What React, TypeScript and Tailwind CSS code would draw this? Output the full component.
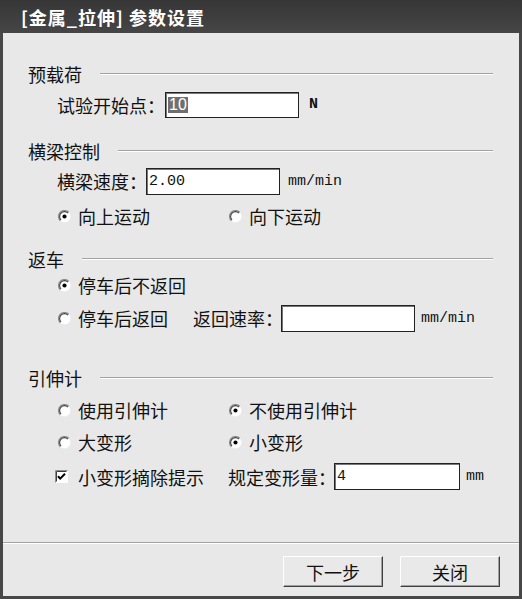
const cjk = "font-['Noto_Sans_CJK_SC','Noto_Sans',sans-serif]";
const mono = "font-['Liberation_Mono','DejaVu_Sans_Mono',monospace]";

const Radio = ({ checked }: { checked?: boolean }) => (
  <svg width="13" height="13" viewBox="0 0 12 12" className="shrink-0">
    <circle cx="6" cy="6" r="5.5" fill="#fff" />
    <path d="M2.1 9.9 A5.5 5.5 0 0 1 9.9 2.1" stroke="#8c8c8c" strokeWidth="1.1" fill="none" />
    <path d="M2.8 9.2 A4.5 4.5 0 0 1 9.2 2.8" stroke="#3c3c3c" strokeWidth="1" fill="none" />
    {checked && <circle cx="6" cy="6" r="1.9" fill="#000" />}
  </svg>
);

const Checkbox = ({ checked }: { checked?: boolean }) => (
  <svg width="13" height="13" viewBox="0 0 13 13" className="shrink-0">
    <rect x="0" y="0" width="13" height="13" fill="#fff" />
    <path d="M0.5 12.5 V0.5 H12.5" stroke="#8c8c8c" strokeWidth="1" fill="none" />
    <path d="M1.5 11.5 V1.5 H11.5" stroke="#3c3c3c" strokeWidth="1" fill="none" />
    {checked && <path d="M3 6.2 L5.2 8.6 L10 3.8" stroke="#000" strokeWidth="2" fill="none" />}
  </svg>
);

const Input = ({ width, children }: { width: string; children?: React.ReactNode }) => (
  <div
    className={`${width} h-[27px] bg-white border border-[#222] shadow-[inset_1px_1px_0_#777] flex items-center pl-[2px] overflow-hidden`}>
    {children}
  </div>
);

const Header = ({ label, className }: { label: string; className: string }) => (
  <div className={`h-[26px] flex items-center ${className}`}>
    <span className="text-[18px] leading-none whitespace-nowrap">{label}</span>
    <div className="flex-1 ml-[18px] h-[2px] border-t border-[#a3a3a3] border-b border-b-white" />
  </div>
);

const Option = ({ label, checked, width }: { label: string; checked?: boolean; width?: string }) => (
  <div className={`flex items-center gap-[7px] ${width ?? ""}`}>
    <Radio checked={checked} />
    <span className="text-[18px] leading-none whitespace-nowrap">{label}</span>
  </div>
);

const Button = ({ label }: { label: string }) => (
  <button className="w-[100px] h-[31px] bg-[#e9e9e9] border border-t-white border-l-white border-r-[#404040] border-b-[#404040] shadow-[inset_-1px_-1px_0_#a0a0a0] text-[18px] leading-none text-[#111]">
    {label}
  </button>
);

export default function App() {
  return (
    <div className={`w-[522px] h-[599px] flex flex-col bg-[#e8e8e8] text-[#111] ${cjk}`}>
      {/* Title bar */}
      <div className="h-[33px] shrink-0 flex items-center pl-[21px] bg-linear-to-b from-[#363636] to-[#464646] text-white text-[18px] font-bold leading-none tracking-[1px]">
        [金属_拉伸]&nbsp;参数设置
      </div>

      <div className="flex-1 flex flex-col border-l-[3px] border-r-[3px] border-b-[3px] border-[#474747]">
        <div className="flex-1 flex flex-col pl-[25px] pr-[26px] pt-[28px]">
          {/* 预载荷 */}
          <Header label="预载荷" className="" />
          <div className="h-[26px] mt-[5px] flex items-center pl-[29px]">
            <span className="w-[108px] text-[18px] leading-none whitespace-nowrap">试验开始点：</span>
            <div className="w-[134px] h-[26px] bg-white border border-[#222] shadow-[inset_1px_1px_0_#777] flex items-center pl-[2px]">
              <span className="bg-[#6f6f6f] text-white text-[16px] leading-none px-[1px] font-['Liberation_Sans',sans-serif]">10</span>
            </div>
            <span className={`ml-[10px] text-[15px] font-bold ${mono}`}>N</span>
          </div>

          {/* 横梁控制 */}
          <Header label="横梁控制" className="mt-[20px]" />
          <div className="h-[26px] mt-[4px] flex items-center pl-[29px]">
            <span className="w-[89px] text-[18px] leading-none whitespace-nowrap">横梁速度：</span>
            <Input width="w-[134px]">
              <span className={`text-[15px] leading-none ${mono}`}>2.00</span>
            </Input>
            <span className={`ml-[8px] mt-[2px] text-[15px] ${mono}`}>mm/min</span>
          </div>
          <div className="h-[26px] mt-[9px] flex items-center pl-[30px]">
            <Option label="向上运动" checked width="w-[171px]" />
            <Option label="向下运动" />
          </div>

          {/* 返车 */}
          <Header label="返车" className="mt-[17px]" />
          <div className="h-[26px] flex items-center pl-[30px]">
            <Option label="停车后不返回" checked />
          </div>
          <div className="h-[26px] mt-[7px] flex items-center pl-[30px]">
            <Option label="停车后返回" width="w-[135px]" />
            <span className="w-[88px] text-[18px] leading-none whitespace-nowrap">返回速率：</span>
            <Input width="w-[134px]" />
            <span className={`ml-[6px] mt-[2px] text-[15px] ${mono}`}>mm/min</span>
          </div>

          {/* 引伸计 */}
          <Header label="引伸计" className="mt-[34px]" />
          <div className="h-[26px] mt-[6px] flex items-center pl-[30px]">
            <Option label="使用引伸计" width="w-[171px]" />
            <Option label="不使用引伸计" checked />
          </div>
          <div className="h-[26px] mt-[6px] flex items-center pl-[30px]">
            <Option label="大变形" width="w-[171px]" />
            <Option label="小变形" checked />
          </div>
          <div className="h-[27px] mt-[8px] flex items-center pl-[27px]">
            <div className="w-[173px] flex items-center gap-[10px]">
              <Checkbox checked />
              <span className="text-[18px] leading-none whitespace-nowrap">小变形摘除提示</span>
            </div>
            <span className="w-[106px] text-[18px] leading-none whitespace-nowrap">规定变形量：</span>
            <Input width="w-[126px]">
              <span className={`text-[15px] leading-none ${mono}`}>4</span>
            </Input>
            <span className={`ml-[6px] mt-[2px] text-[15px] ${mono}`}>mm</span>
          </div>
        </div>

        {/* Separator */}
        <div className="h-[2px] shrink-0 border-t border-[#a3a3a3] border-b border-b-white" />

        {/* Footer buttons */}
        <div className="h-[52px] shrink-0 flex justify-end items-start pt-[12px] pr-[19px] gap-[17px]">
          <Button label="下一步" />
          <Button label="关闭" />
        </div>
      </div>
    </div>
  );
}
